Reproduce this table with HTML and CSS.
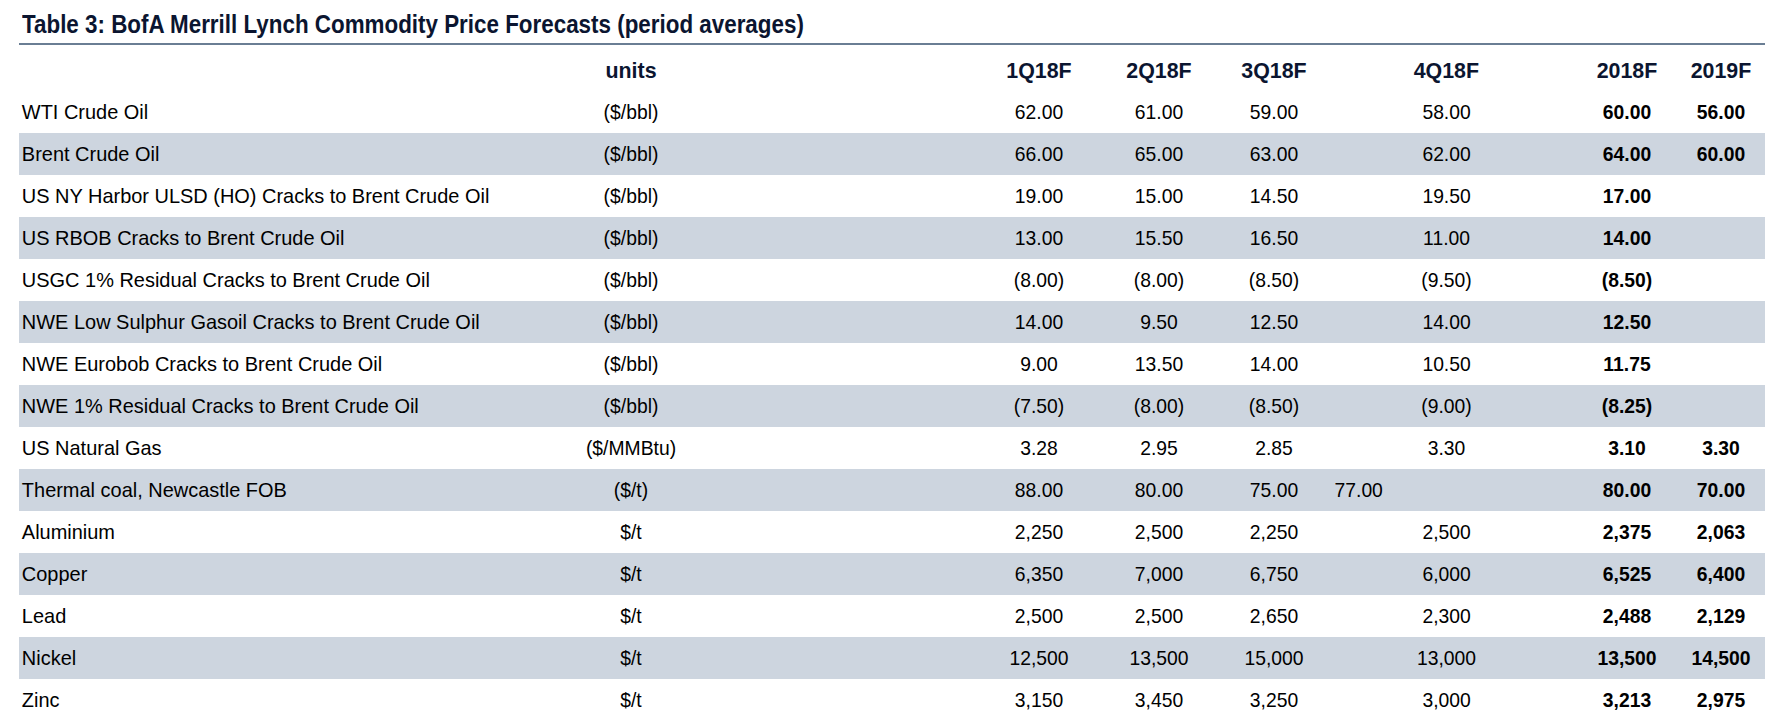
FILE: index.html
```html
<!DOCTYPE html>
<html lang="en">
<head>
<meta charset="utf-8">
<title>Table 3: BofA Merrill Lynch Commodity Price Forecasts</title>
<link rel="stylesheet" href="styles.css">
</head>
<body>
<div class="page">
  <h1 class="title"><span class="title-text">Table 3: BofA Merrill Lynch Commodity Price Forecasts (period averages)</span></h1>
  <div class="table">
    <div class="row head">
      <div class="unit">units</div>
      <div class="q1">1Q18F</div><div>2Q18F</div><div>3Q18F</div><div class="q4">4Q18F</div><div>2018F</div><div>2019F</div>
    </div>
    <div class="row">
      <div class="name">WTI Crude Oil</div><div class="unit">($/bbl)</div>
      <div class="q1">62.00</div><div>61.00</div><div>59.00</div><div class="q4">58.00</div><div class="b">60.00</div><div class="b">56.00</div>
    </div>
    <div class="row">
      <div class="name">Brent Crude Oil</div><div class="unit">($/bbl)</div>
      <div class="q1">66.00</div><div>65.00</div><div>63.00</div><div class="q4">62.00</div><div class="b">64.00</div><div class="b">60.00</div>
    </div>
    <div class="row">
      <div class="name">US NY Harbor ULSD (HO) Cracks to Brent Crude Oil</div><div class="unit">($/bbl)</div>
      <div class="q1">19.00</div><div>15.00</div><div>14.50</div><div class="q4">19.50</div><div class="b">17.00</div><div class="b"></div>
    </div>
    <div class="row">
      <div class="name">US RBOB Cracks to Brent Crude Oil</div><div class="unit">($/bbl)</div>
      <div class="q1">13.00</div><div>15.50</div><div>16.50</div><div class="q4">11.00</div><div class="b">14.00</div><div class="b"></div>
    </div>
    <div class="row">
      <div class="name">USGC 1% Residual Cracks to Brent Crude Oil</div><div class="unit">($/bbl)</div>
      <div class="q1">(8.00)</div><div>(8.00)</div><div>(8.50)</div><div class="q4">(9.50)</div><div class="b">(8.50)</div><div class="b"></div>
    </div>
    <div class="row">
      <div class="name">NWE Low Sulphur Gasoil Cracks to Brent Crude Oil</div><div class="unit">($/bbl)</div>
      <div class="q1">14.00</div><div>9.50</div><div>12.50</div><div class="q4">14.00</div><div class="b">12.50</div><div class="b"></div>
    </div>
    <div class="row">
      <div class="name">NWE Eurobob Cracks to Brent Crude Oil</div><div class="unit">($/bbl)</div>
      <div class="q1">9.00</div><div>13.50</div><div>14.00</div><div class="q4">10.50</div><div class="b">11.75</div><div class="b"></div>
    </div>
    <div class="row">
      <div class="name">NWE 1% Residual Cracks to Brent Crude Oil</div><div class="unit">($/bbl)</div>
      <div class="q1">(7.50)</div><div>(8.00)</div><div>(8.50)</div><div class="q4">(9.00)</div><div class="b">(8.25)</div><div class="b"></div>
    </div>
    <div class="row">
      <div class="name">US Natural Gas</div><div class="unit">($/MMBtu)</div>
      <div class="q1">3.28</div><div>2.95</div><div>2.85</div><div class="q4">3.30</div><div class="b">3.10</div><div class="b">3.30</div>
    </div>
    <div class="row">
      <div class="name">Thermal coal, Newcastle FOB</div><div class="unit">($/t)</div>
      <div class="q1">88.00</div><div>80.00</div><div>75.00</div><div class="q4 left">77.00</div><div class="b">80.00</div><div class="b">70.00</div>
    </div>
    <div class="row">
      <div class="name">Aluminium</div><div class="unit">$/t</div>
      <div class="q1">2,250</div><div>2,500</div><div>2,250</div><div class="q4">2,500</div><div class="b">2,375</div><div class="b">2,063</div>
    </div>
    <div class="row">
      <div class="name">Copper</div><div class="unit">$/t</div>
      <div class="q1">6,350</div><div>7,000</div><div>6,750</div><div class="q4">6,000</div><div class="b">6,525</div><div class="b">6,400</div>
    </div>
    <div class="row">
      <div class="name">Lead</div><div class="unit">$/t</div>
      <div class="q1">2,500</div><div>2,500</div><div>2,650</div><div class="q4">2,300</div><div class="b">2,488</div><div class="b">2,129</div>
    </div>
    <div class="row">
      <div class="name">Nickel</div><div class="unit">$/t</div>
      <div class="q1">12,500</div><div>13,500</div><div>15,000</div><div class="q4">13,000</div><div class="b">13,500</div><div class="b">14,500</div>
    </div>
    <div class="row">
      <div class="name">Zinc</div><div class="unit">$/t</div>
      <div class="q1">3,150</div><div>3,450</div><div>3,250</div><div class="q4">3,000</div><div class="b">3,213</div><div class="b">2,975</div>
    </div>
  </div>
</div>
</body>
</html>
```

FILE: styles.css
```css
* { box-sizing: border-box; }

body {
  margin: 0;
  background: #ffffff;
  color: #000000;
  font-family: "Liberation Sans", Arial, sans-serif;
}

.page {
  padding: 0 20px 0 19px;
}

.title {
  margin: 0;
  padding: 9px 0 4px 3px;
  height: 45px;
  line-height: 30px;
  font-family: "Liberation Sans", Arial, sans-serif;
  font-size: 26.5px;
  font-weight: bold;
  color: #0b1530;
  white-space: nowrap;
  border-bottom: 2px solid #6a7e94;
}

.title-text {
  display: inline-block;
  transform: scaleX(0.845);
  transform-origin: left center;
}

.table {
  margin-top: 4px;
}

.row {
  display: grid;
  grid-template-columns: 541px 142px 277px 120px 120px 110px 248px 100px 88px;
  height: 42px;
  line-height: 42px;
  font-size: 21px;
  white-space: nowrap;
}

.row > div {
  text-align: center;
  transform: scaleX(0.92);
}

.row:nth-child(odd):not(.head) {
  background: #cdd5df;
}

.row .name {
  grid-column: 1;
  text-align: left;
  padding-left: 3px;
  transform: scaleX(0.95);
  transform-origin: left center;
}

.row .unit {
  grid-column: 2;
}

.row .q1 {
  grid-column: 4;
}

.row .q4 {
  padding-right: 14px;
}

.row .q4.left {
  text-align: left;
  padding-left: 6px;
  transform-origin: left center;
}

.row .b {
  font-weight: bold;
}

.head {
  font-size: 22.5px;
  font-weight: bold;
  color: #0b1530;
  padding-top: 2px;
  line-height: 40px;
}

.head > div {
  transform: scaleX(0.95);
}
```
